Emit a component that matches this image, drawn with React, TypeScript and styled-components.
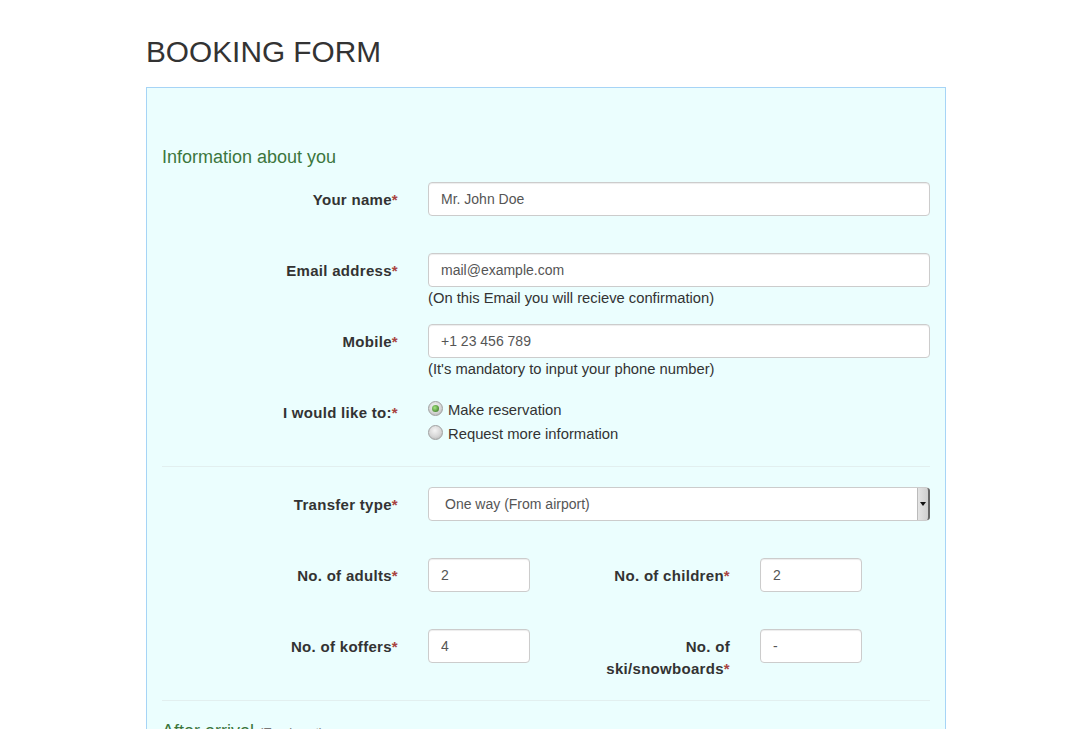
import React from "react";
import styled, { createGlobalStyle } from "styled-components";

const Global = createGlobalStyle`
  html, body { margin: 0; padding: 0; background: #fff; }
  body {
    font-family: "Liberation Sans", Arial, sans-serif;
    font-size: 15px;
    line-height: 20px;
    color: #333;
  }
  * { box-sizing: border-box; }
`;

const Page = styled.div`
  width: 800px;
  margin-left: 146px;
  height: 729px;
  overflow: hidden;
`;

const Title = styled.h1`
  margin: 35px 0 19px;
  font-size: 29.8px;
  line-height: 33px;
  font-weight: 400;
  color: #333;
`;

const Panel = styled.div`
  border: 1px solid #a6d4f6;
  background: #ebfefe;
  padding: 59px 15px 40px;
`;

const Legend = styled.div`
  font-size: 18px;
  line-height: 20px;
  color: #3c763d;
  margin-bottom: 15px;
`;

const Small = styled.span`
  font-size: 13px;
  color: #777;
`;

const Group = styled.div<{ $cols?: string }>`
  display: grid;
  grid-template-columns: ${(p) => p.$cols || "236px 1fr"};
  column-gap: 30px;
  align-items: start;
  min-height: 56px;
  margin-bottom: 15px;
`;

const Label = styled.label`
  text-align: right;
  font-weight: 700;
  font-size: 15px;
  letter-spacing: 0.3px;
  line-height: 22px;
  padding-top: 7px;
  color: #333;
`;

const Req = styled.span`
  color: #a94442;
`;

const Control = styled.div`
  display: flex;
  flex-direction: column;
`;

const Input = styled.input`
  height: 34px;
  width: 100%;
  padding: 6px 12px;
  font-family: "Liberation Sans", Arial, sans-serif;
  font-size: 14px;
  color: #555;
  background: #fff;
  border: 1px solid #ccc;
  border-radius: 4px;
  box-shadow: inset 0 1px 1px rgba(0, 0, 0, 0.075);
  outline: none;
`;

const Help = styled.span`
  display: block;
  line-height: 22px;
  font-size: 14.75px;
  color: #333;
`;

const RadioGroup = styled.div`
  padding-top: 3px;
  display: flex;
  flex-direction: column;
`;

const RadioRow = styled.label`
  display: flex;
  align-items: center;
  height: 24px;
  gap: 5px;
  font-size: 14.8px;
  color: #333;
`;

const RadioDot = styled.span<{ $checked?: boolean }>`
  width: 15px;
  height: 15px;
  flex: none;
  border-radius: 50%;
  border: 1px solid #a0a0a0;
  background: radial-gradient(circle at 45% 35%, #f4f4f4 0%, #d6d6d6 55%, #ababab 100%);
  display: flex;
  align-items: center;
  justify-content: center;
  margin-top: -3px;
  &::after {
    content: "";
    display: ${(p) => (p.$checked ? "block" : "none")};
    width: 7px;
    height: 7px;
    border-radius: 50%;
    background: radial-gradient(circle at 40% 40%, #a6e684 0%, #5a9a40 60%, #3a6a2a 100%);
  }
`;

const Divider = styled.hr`
  border: 0;
  border-top: 1px solid #e2efef;
  margin: 0 0 20px;
`;

const SelectWrap = styled.div`
  position: relative;
  height: 34px;
`;

const Select = styled.select`
  appearance: none;
  -webkit-appearance: none;
  width: 100%;
  height: 34px;
  padding: 6px 16px;
  font-family: "Liberation Sans", Arial, sans-serif;
  font-size: 14px;
  color: #555;
  background: #fff;
  border: 1px solid #ccc;
  border-radius: 4px;
  outline: none;
`;

const Arrow = styled.span`
  position: absolute;
  top: 1px;
  right: 0;
  width: 13px;
  height: 32px;
  background: linear-gradient(to right, #e4e4e4, #cfcfcf);
  border-left: 1px solid #bbb;
  border-right: 2px solid #666;
  border-radius: 0 3px 3px 0;
  display: flex;
  align-items: center;
  justify-content: center;
  &::after {
    content: "";
    width: 0;
    height: 0;
    border-left: 3px solid transparent;
    border-right: 3px solid transparent;
    border-top: 4px solid #111;
  }
`;

const NextLegend = styled(Legend)`
  margin-top: 17px;
`;

export default function App() {
  return (
    <>
      <Global />
      <Page>
        <Title>BOOKING FORM</Title>
        <Panel>
          <Legend>Information about you</Legend>

          <Group>
            <Label>
              Your name<Req>*</Req>
            </Label>
            <Control>
              <Input defaultValue="Mr. John Doe" />
            </Control>
          </Group>

          <Group>
            <Label>
              Email address<Req>*</Req>
            </Label>
            <Control>
              <Input defaultValue="mail@example.com" />
              <Help>(On this Email you will recieve confirmation)</Help>
            </Control>
          </Group>

          <Group>
            <Label>
              Mobile<Req>*</Req>
            </Label>
            <Control>
              <Input defaultValue="+1 23 456 789" />
              <Help>(It's mandatory to input your phone number)</Help>
            </Control>
          </Group>

          <Group>
            <Label>
              I would like to:<Req>*</Req>
            </Label>
            <RadioGroup>
              <RadioRow>
                <RadioDot $checked />
                Make reservation
              </RadioRow>
              <RadioRow>
                <RadioDot />
                Request more information
              </RadioRow>
            </RadioGroup>
          </Group>

          <Divider />

          <Group>
            <Label>
              Transfer type<Req>*</Req>
            </Label>
            <SelectWrap>
              <Select defaultValue="one">
                <option value="one">One way (From airport)</option>
                <option value="two">One way (To airport)</option>
                <option value="return">Return</option>
              </Select>
              <Arrow />
            </SelectWrap>
          </Group>

          <Group $cols="236px 102px 170px 102px">
            <Label>
              No. of adults<Req>*</Req>
            </Label>
            <Input defaultValue="2" />
            <Label>
              No. of children<Req>*</Req>
            </Label>
            <Input defaultValue="2" />
          </Group>

          <Group $cols="236px 102px 170px 102px">
            <Label>
              No. of koffers<Req>*</Req>
            </Label>
            <Input defaultValue="4" />
            <Label>
              No. of
              <br />
              ski/snowboards<Req>*</Req>
            </Label>
            <Input defaultValue="-" />
          </Group>

          <Divider />

          <NextLegend>
            After arrival <Small>(Ex airport)</Small>
          </NextLegend>
        </Panel>
      </Page>
    </>
  );
}
